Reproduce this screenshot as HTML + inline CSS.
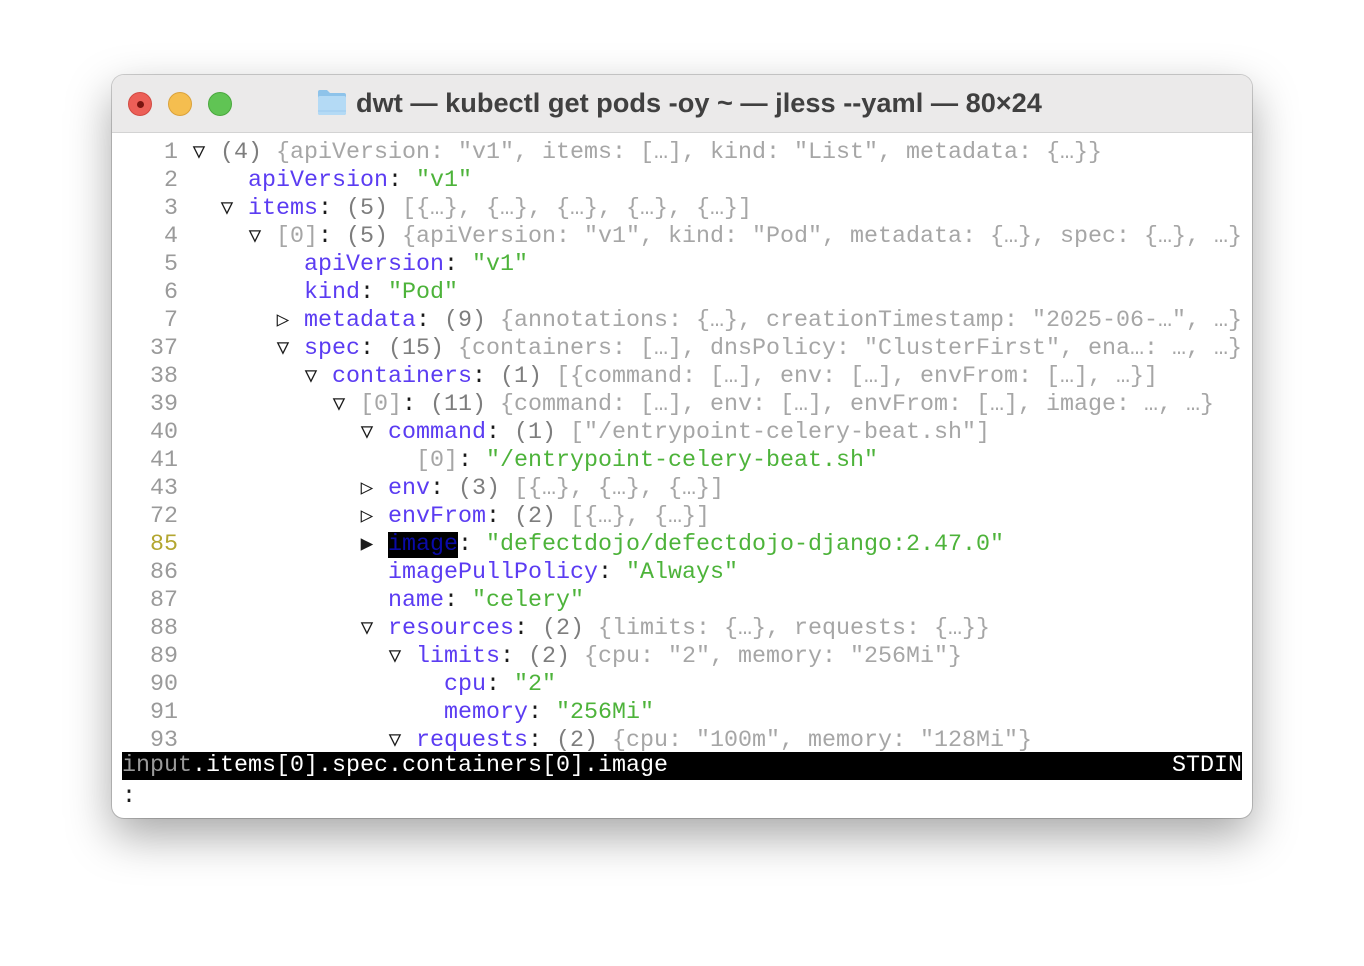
<!DOCTYPE html>
<html><head><meta charset="utf-8"><style>
html,body{margin:0;padding:0;background:#fff;width:1364px;height:966px;overflow:hidden}
.win{position:absolute;left:112px;top:75px;width:1140px;height:743px;border-radius:12px;background:#fff;box-shadow:0 18px 45px rgba(0,0,0,.35),0 0 0 1px rgba(0,0,0,.18);overflow:hidden}
.tb{position:absolute;left:0;top:0;width:100%;height:57px;background:#ebeaea;border-bottom:1px solid #d3d3d3}
.dot{position:absolute;top:17px;width:24px;height:24px;border-radius:50%}
.title{position:absolute;left:244px;top:12px;font:bold 27.2px "Liberation Sans",sans-serif;color:#404040;white-space:nowrap}
pre{position:absolute;left:10px;top:64px;margin:0;font-family:"Liberation Mono","DejaVu Sans Mono",monospace;font-size:23.33px;line-height:28px;color:#1a1a1a}
.g{color:#a6a6a6}.c{color:#7d7d7d}.k{color:#5b3cf2}.s{color:#4db33a}.n{color:#9a9a9a}
.t{display:inline-block;width:14px;text-align:center;font-family:"DejaVu Sans Mono",monospace;font-size:21px;line-height:20px}
.hl{background:#000;color:#0a0aa8}
.bar{position:absolute;left:10px;width:1120px;height:28px;background:#000;color:#fff}
</style></head><body>
<div class="win">
<div class="tb">
<div class="dot" style="left:16px;background:#ec5f57;border:1px solid #d24a42;box-sizing:border-box"><div style="position:absolute;left:8px;top:8px;width:7px;height:7px;border-radius:50%;background:#7a1510"></div></div>
<div class="dot" style="left:56px;background:#f5be4f;border:1px solid #dba23a;box-sizing:border-box"></div>
<div class="dot" style="left:96px;background:#60c454;border:1px solid #4aa83e;box-sizing:border-box"></div>
<svg style="position:absolute;left:205px;top:14px" width="30" height="27" viewBox="0 0 30 27"><path d="M1 3 Q1 1 3 1 H10 L13 4 H27 Q29 4 29 6 V24 Q29 26 27 26 H3 Q1 26 1 24 Z" fill="#8ec3ea"/><rect x="1" y="7" width="28" height="19" rx="2" fill="#b4daf5"/><line x1="1" y1="22" x2="29" y2="22" stroke="#9ccbee"/></svg>
<div class="title">dwt — kubectl get pods -oy ~ — jless --yaml — 80×24</div>
</div>
<pre><span class="n">   1</span> <span class="t">▽</span> <span class="c">(4)</span> <span class="g">{apiVersion: "v1", items: […], kind: "List", metadata: {…}}</span>
<span class="n">   2</span>     <span class="k">apiVersion</span>: <span class="s">"v1"</span>
<span class="n">   3</span>   <span class="t">▽</span> <span class="k">items</span>: <span class="c">(5)</span> <span class="g">[{…}, {…}, {…}, {…}, {…}]</span>
<span class="n">   4</span>     <span class="t">▽</span> <span class="g">[0]</span>: <span class="c">(5)</span> <span class="g">{apiVersion: "v1", kind: "Pod", metadata: {…}, spec: {…}, …}</span>
<span class="n">   5</span>         <span class="k">apiVersion</span>: <span class="s">"v1"</span>
<span class="n">   6</span>         <span class="k">kind</span>: <span class="s">"Pod"</span>
<span class="n">   7</span>       <span class="t">▷</span> <span class="k">metadata</span>: <span class="c">(9)</span> <span class="g">{annotations: {…}, creationTimestamp: "2025-06-…", …}</span>
<span class="n">  37</span>       <span class="t">▽</span> <span class="k">spec</span>: <span class="c">(15)</span> <span class="g">{containers: […], dnsPolicy: "ClusterFirst", ena…: …, …}</span>
<span class="n">  38</span>         <span class="t">▽</span> <span class="k">containers</span>: <span class="c">(1)</span> <span class="g">[{command: […], env: […], envFrom: […], …}]</span>
<span class="n">  39</span>           <span class="t">▽</span> <span class="g">[0]</span>: <span class="c">(11)</span> <span class="g">{command: […], env: […], envFrom: […], image: …, …}</span>
<span class="n">  40</span>             <span class="t">▽</span> <span class="k">command</span>: <span class="c">(1)</span> <span class="g">["/entrypoint-celery-beat.sh"]</span>
<span class="n">  41</span>                 <span class="g">[0]</span>: <span class="s">"/entrypoint-celery-beat.sh"</span>
<span class="n">  43</span>             <span class="t">▷</span> <span class="k">env</span>: <span class="c">(3)</span> <span class="g">[{…}, {…}, {…}]</span>
<span class="n">  72</span>             <span class="t">▷</span> <span class="k">envFrom</span>: <span class="c">(2)</span> <span class="g">[{…}, {…}]</span>
<span style="color:#b3a630">  85</span>             <span class="t">▶</span> <span class="hl">image</span>: <span class="s">"defectdojo/defectdojo-django:2.47.0"</span>
<span class="n">  86</span>               <span class="k">imagePullPolicy</span>: <span class="s">"Always"</span>
<span class="n">  87</span>               <span class="k">name</span>: <span class="s">"celery"</span>
<span class="n">  88</span>             <span class="t">▽</span> <span class="k">resources</span>: <span class="c">(2)</span> <span class="g">{limits: {…}, requests: {…}}</span>
<span class="n">  89</span>               <span class="t">▽</span> <span class="k">limits</span>: <span class="c">(2)</span> <span class="g">{cpu: "2", memory: "256Mi"}</span>
<span class="n">  90</span>                   <span class="k">cpu</span>: <span class="s">"2"</span>
<span class="n">  91</span>                   <span class="k">memory</span>: <span class="s">"256Mi"</span>
<span class="n">  93</span>               <span class="t">▽</span> <span class="k">requests</span>: <span class="c">(2)</span> <span class="g">{cpu: "100m", memory: "128Mi"}</span>
</pre>
<pre class="bar" style="top:677px"><span style="color:#9a9a9a">input</span>.items[0].spec.containers[0].image<span style="position:absolute;right:0;top:0">STDIN</span></pre>
<pre style="top:708px">:</pre>
</div>
</body></html>
